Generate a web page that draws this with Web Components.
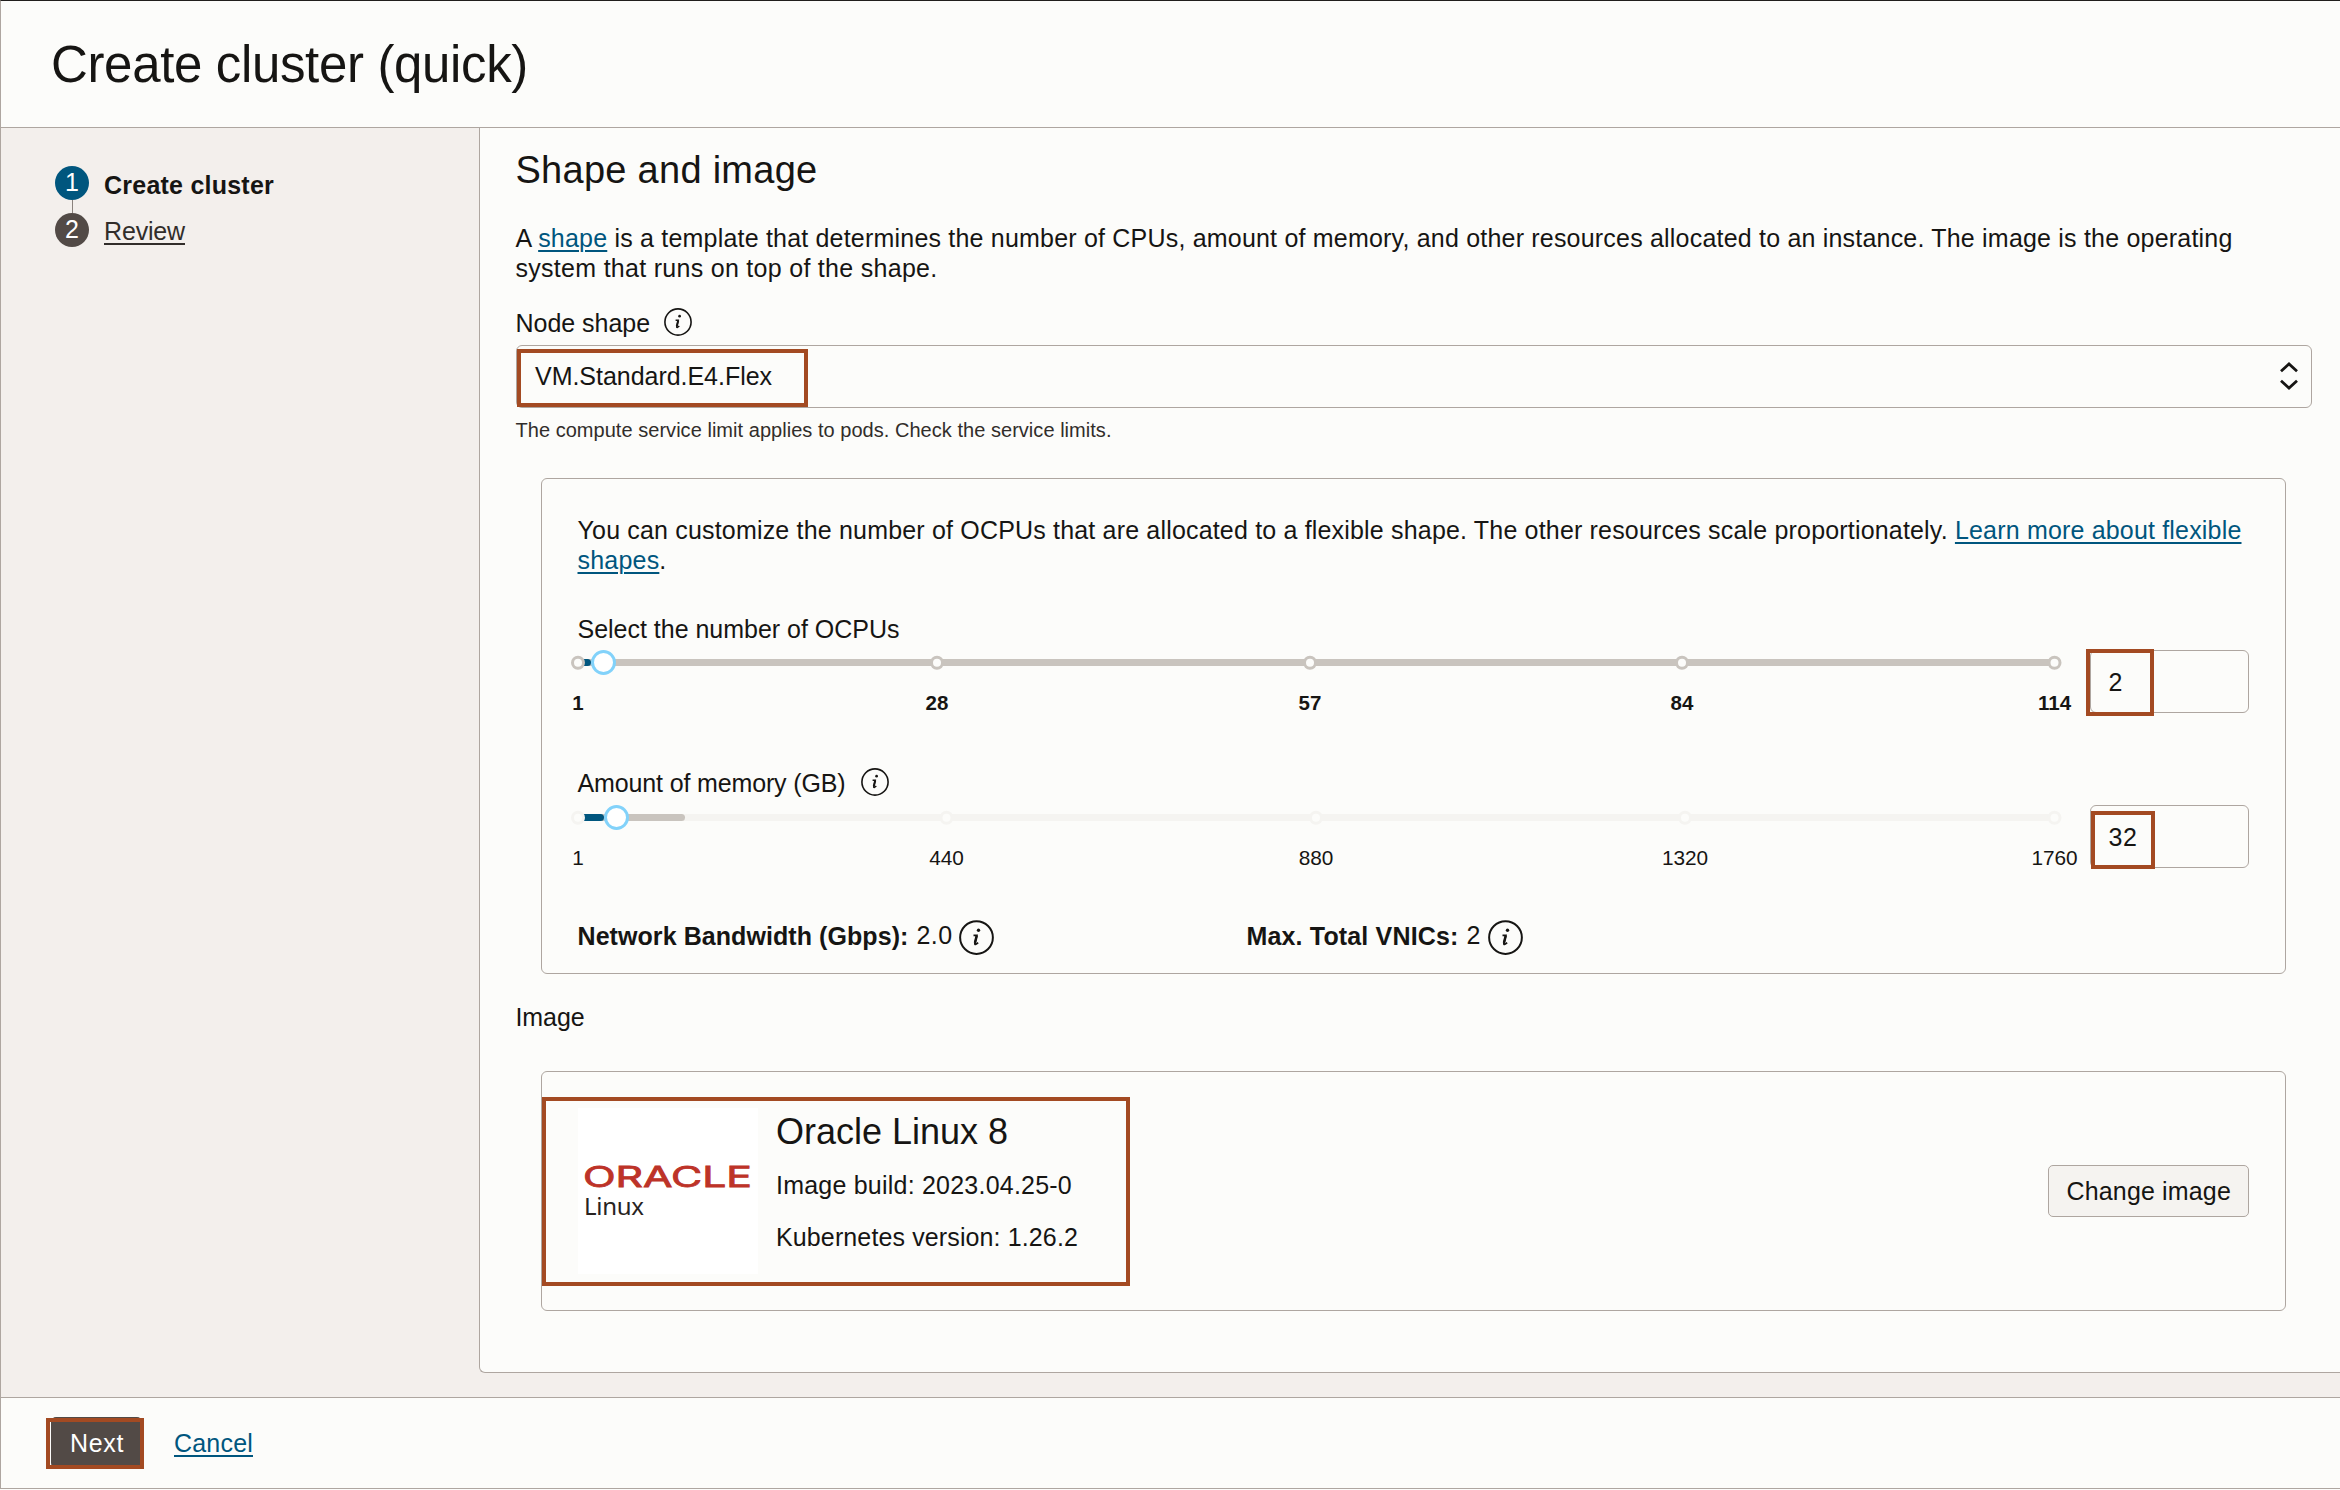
<!DOCTYPE html>
<html lang="en">
<head>
<meta charset="utf-8">
<title>Create cluster (quick)</title>
<style>
html,body{margin:0;height:1490px;background:#fcfcfa;overflow:hidden}
body{font:25px/30px "Liberation Sans",Arial,sans-serif;color:#161513}
</style>
</head>
<body>
<cluster-wizard></cluster-wizard>
<script>
const define = (name, html, setup) => customElements.define(name, class extends HTMLElement {
  connectedCallback() {
    if (this.shadowRoot) return;
    this.attachShadow({ mode: 'open' }).innerHTML = typeof html === 'function' ? html(this) : html;
    if (setup) setup(this);
  }
});
const LINK = 'a{color:#00567e;text-decoration:underline;text-decoration-thickness:2px;text-underline-offset:3px}';

define('cluster-wizard', `<style>
  :host{display:flex;flex-direction:column;box-sizing:border-box;width:2340px;height:1489px;border-left:1px solid #aea6a0;border-top:1px solid #201e1c;border-bottom:1px solid #aea6a0;background:#fcfcfa}
  .body{display:flex;height:1269px;background:#f3efec}
</style>
<wizard-header></wizard-header>
<div class="body"><wizard-steps></wizard-steps><shape-panel></shape-panel></div>
<wizard-footer></wizard-footer>`);

define('wizard-header', `<style>
  :host{display:block;box-sizing:border-box;height:127px;border-bottom:1px solid #aea6a0;padding:35px 0 0 50px}
  fit-text{font-size:51px;line-height:57px}
</style><fit-text w="477">Create cluster (quick)</fit-text>`);

define('wizard-steps', `<style>
  :host{display:block;width:478px;padding:38px 0 0 54px;box-sizing:border-box;flex:none}
  .step{display:flex;height:34px;gap:15px}
  .dot{width:34px;height:34px;border-radius:50%;background:#00567e;color:#fff;text-align:center;line-height:33px;font-size:25px}
  .two .dot{background:#524a46}
  .line{width:1px;height:13px;background:#8a827d;margin-left:17px}
  b{display:block;padding-top:4px} .two fit-text{padding-top:3px;color:#312d2a}
  .r{text-decoration:underline;text-decoration-thickness:2px;text-underline-offset:3px}
</style>
<div class="step"><span class="dot">1</span><b><fit-text w="170">Create cluster</fit-text></b></div>
<div class="line"></div>
<div class="step two"><span class="dot">2</span><fit-text w="81"><span class="r">Review</span></fit-text></div>`);

define('info-icon', `<style>:host{display:block;width:var(--s,28px);height:var(--s,28px);flex:none}svg{display:block;width:100%;height:100%}</style>
<svg viewBox="0 0 28 28" fill="none" stroke="#161513"><circle cx="14" cy="14" r="13.1" stroke-width="1.6"/>
<circle cx="15.6" cy="8.2" r="1.35" fill="#161513" stroke="none"/>
<path d="M11.6 12.2h2.7L12.7 18.6c-.25 1.3.9 1.2 2.6-.5" stroke-width="1.4"/><path d="M14.2 12.4L12.8 18.2" stroke-width="2"/></svg>`);

define('mark-box', `<style>:host{display:block;position:absolute;box-sizing:border-box;border:4px solid #a34a22;pointer-events:none}</style>`);

define('shape-panel', `<style>
  :host{display:block;box-sizing:border-box;width:1861px;height:1245px;border:1px solid #aea6a0;border-width:0 0 1px 1px;border-bottom-left-radius:6px;background:#fcfcfa;padding:21px 0 0 35.5px}
  h2{margin:0 0 32px;font-size:38px;line-height:42px;font-weight:400}
  .label{display:flex;gap:14px;margin:25px 0 7px;height:30px}
  .help{font-size:20px;line-height:24px;color:#312d2a;margin:10px 0 36px}
  .img{margin:28px 0 39px}
  ${LINK}
</style>
<h2><fit-text w="302">Shape and image</fit-text></h2>
<fit-text w="1717">A <a>shape</a> is a template that determines the number of CPUs, amount of memory, and other resources allocated to an instance. The image is the operating</fit-text>
<fit-text w="422">system that runs on top of the shape.</fit-text>
<div class="label"><fit-text w="134.5">Node shape</fit-text><info-icon></info-icon></div>
<select-box></select-box>
<fit-text class="help" w="596">The compute service limit applies to pods. Check the service limits.</fit-text>
<flex-card></flex-card>
<fit-text class="img" w="69">Image</fit-text>
<image-card></image-card>`);

define('select-box', `<style>
  :host{display:flex;position:relative;box-sizing:border-box;width:1796px;height:63px;border:1px solid #aea6a0;border-radius:6px;justify-content:space-between;padding:15px 13px 0 18px;margin-left:.5px}
  mark-box{left:0;top:3px;width:291px;height:58px}
  svg{margin-top:1px}
</style>
<fit-text w="237">VM.Standard.E4.Flex</fit-text>
<svg width="18" height="28" viewBox="0 0 18 28" fill="none" stroke="#161513" stroke-width="2.8"><path d="M1 9.2L9 2l8 7.2M1 18.8L9 26l8-7.2"/></svg>
<mark-box></mark-box>`);

define('flex-card', `<style>
  :host{display:block;box-sizing:border-box;width:1745px;height:496px;margin-left:25.5px;border:1px solid #aea6a0;border-radius:6px;padding:36px 0 0 35.5px}
  .stats{display:flex;margin-top:49px;height:34px}
  .stat{display:flex;width:669px}
  .stat>*{margin-top:1px}
  .stat .v{margin:0 6px 0 8px} info-icon{--s:35px} .stat info-icon{margin-top:0}
  ${LINK}
</style>
<fit-text w="1664">You can customize the number of OCPUs that are allocated to a flexible shape. The other resources scale proportionately. <a>Learn more about flexible</a></fit-text>
<fit-text w="89"><a>shapes</a>.</fit-text>
<range-field style="margin-top:39px;--lead:6px" kind="cpu"></range-field>
<range-field style="margin-top:53px;--lead:7px" kind="mem"></range-field>
<div class="stats">
 <div class="stat"><fit-text w="331"><b>Network Bandwidth (Gbps):</b></fit-text><fit-text class="v" w="36">2.0</fit-text><info-icon></info-icon></div>
 <div class="stat"><fit-text w="212"><b>Max. Total VNICs:</b></fit-text><fit-text class="v" w="15">2</fit-text><info-icon></info-icon></div>
</div>`);

const KINDS = {
  cpu: { label: '<fit-text w="322">Select the number of OCPUs</fit-text>', ticks: [8, 367, 740, 1112, 1484.5], names: [1, 28, 57, 84, 114], track: '#c9c4be', font: '700 20.5px', fill: 21, thumb: 33.5, end: 0, value: '<fit-text w="15">2</fit-text>', mark: 'left:-5px;top:-2px;width:68px;height:67px', h: 101 },
  mem: { label: '<fit-text w="268">Amount of memory (GB)</fit-text><info-icon></info-icon>', ticks: [8, 376.5, 746, 1115, 1484.5], names: [1, 440, 880, 1320, 1760], track: '#f5f4f1', font: '400 20.8px', fill: 34, thumb: 46.5, end: 115, value: '<fit-text w="29">32</fit-text>', mark: 'left:0;top:5px;width:64px;height:58px', h: 103 }
};
define('range-field', host => {
  const k = KINDS[host.getAttribute('kind')], t = k.ticks;
  const cols = t.slice(1).map((x, i) => (x - t[i]) + 'px').join(' ') + ' 0px';
  return `<style>
  :host{display:flex;height:${k.h}px}
  .l{width:1512.5px} .label{display:flex;height:30px;gap:15px}
  svg{display:block;margin:var(--lead) 0 0 -7.5px}
  .names{display:grid;grid-template-columns:${cols};margin:16px 0 0 .5px;font:${k.font}/24px "Liberation Sans",Arial,sans-serif}
  .names span{width:0;display:flex;justify-content:center}
  .in{position:relative;box-sizing:border-box;width:159px;height:63px;margin-top:calc(30px + var(--lead));border:1px solid #aea6a0;border-radius:6px;padding:16px 0 0 17.5px}
  mark-box{${k.mark}}
  </style>
  <div class="l"><div class="label">${k.label}</div>
  <svg width="1493" height="25" viewBox="0 0 1493 25">
    <rect x="8" y="9" width="1476" height="7" fill="${k.track}"/>
    ${k.end ? `<rect x="20" y="9" width="${k.end - 20}" height="7" rx="3.5" fill="#c9c4be"/>` : ''}
    <rect x="8" y="9" width="${k.fill - 8}" height="7" rx="3.5" fill="#00567e"/>
    ${t.map(x => `<circle cx="${x}" cy="12.7" r="5.5" fill="#fcfcfa" stroke="${k.track}" stroke-width="3"/>`).join('')}
    <circle cx="${k.thumb}" cy="12.5" r="11" fill="#fff" stroke="#82d2fa" stroke-width="3"/>
  </svg>
  <div class="names">${k.names.map(n => `<span>${n}</span>`).join('')}</div></div>
  <div class="in">${k.value}<mark-box></mark-box></div>`;
});

define('image-card', `<style>
  :host{display:flex;position:relative;box-sizing:border-box;width:1745px;height:240px;margin-left:25.5px;border:1px solid #aea6a0;border-radius:6px;padding:36px 36px 0 36px}
  .logo{width:180px;height:166px;background:#fff;flex:none} .logo svg{display:block}
  .info{flex:1;padding-left:18px}
  .t{font-size:36px;line-height:42px;margin-top:3px} .b{margin-top:17px} .k{margin-top:22px}
  .btn{box-sizing:border-box;width:201px;height:52px;margin-top:57px;border:1px solid #aea6a0;border-radius:5px;background:#f5f3f0;padding:10px 0 0 17.5px}
  mark-box{left:0;top:25px;width:588px;height:189px}
</style>
<div class="logo"><svg width="180" height="166" viewBox="0 0 180 166">
 <text x="5" y="79.2" textLength="169" lengthAdjust="spacingAndGlyphs" font-family="Inter,sans-serif" font-size="28.4" font-weight="400" fill="#bd3328" stroke="#bd3328" stroke-width=".8">ORACLE</text>
 <text x="6" y="107" textLength="60" font-family="'Noto Sans',sans-serif" font-size="24" fill="#272321">Linux</text></svg></div>
<div class="info"><fit-text class="t" w="232">Oracle Linux 8</fit-text><fit-text class="b" w="296">Image build: 2023.04.25-0</fit-text><fit-text class="k" w="302">Kubernetes version: 1.26.2</fit-text></div>
<div class="btn"><fit-text w="164.5">Change image</fit-text></div>
<mark-box></mark-box>`);

define('wizard-footer', `<style>
  :host{display:flex;flex:1;box-sizing:border-box;border-top:1px solid #aea6a0;padding:19px 0 0 49px}
  .next{position:relative;box-sizing:border-box;width:91px;height:51px;border-radius:5px;background:#524a46;color:#fff;padding:11px 0 0 19px;margin-left:1px}
  mark-box{left:-5px;top:1px;width:98px;height:51px}
  .c{margin:11px 0 0 32px}
  ${LINK}
</style>
<div class="next"><fit-text w="54">Next</fit-text><mark-box></mark-box></div>
<fit-text class="c" w="79"><a>Cancel</a></fit-text>`);

/* One line of text, tracked so that it fills the measure given in "w". */
define('fit-text', `<style>:host{display:block;white-space:nowrap}span{display:inline-block}</style><span><slot></slot></span>`, host => {
  const span = host.shadowRoot.querySelector('span');
  const w = parseFloat(host.getAttribute('w'));
  host.style.width = w + 'px';
  host.style.flexShrink = 0;
  const natural = span.getBoundingClientRect().width;
  span.style.letterSpacing = ((w - natural) / host.textContent.length) + 'px';
});
</script>
</body>
</html>
